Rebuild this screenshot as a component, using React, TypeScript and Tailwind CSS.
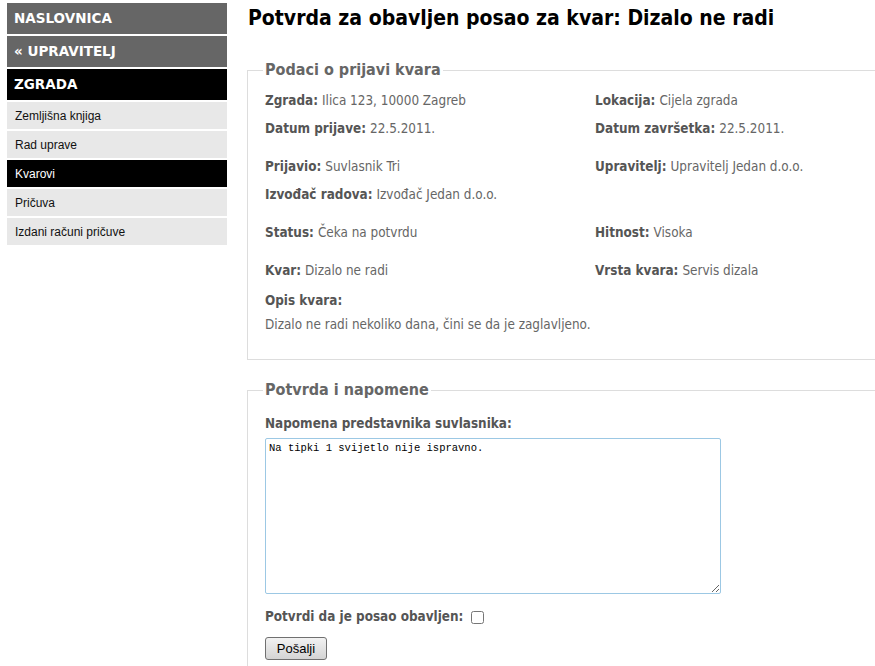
import React from 'react';

const tahoma = "font-['DejaVu_Sans_Condensed','DejaVu_Sans',sans-serif]";

interface FieldProps {
    label: string;
    value?: string;
}

const Field: React.FC<FieldProps> = ({ label, value }) => (
    <div className="h-[28px] flex items-center whitespace-nowrap">
        <span className="font-bold text-[#555]">{label}</span>
        {value && <span className="ml-[4px] text-[#666]">{value}</span>}
    </div>
);

const Row: React.FC<{ left: FieldProps; right?: FieldProps }> = ({ left, right }) => (
    <div className="grid grid-cols-[330px_1fr]">
        <Field {...left} />
        {right ? <Field {...right} /> : <div />}
    </div>
);

const menuHead = [
    { label: 'NASLOVNICA', bg: 'bg-[#666666]' },
    { label: '« UPRAVITELJ', bg: 'bg-[#666666]' },
    { label: 'ZGRADA', bg: 'bg-black' },
];

const menuSub = ['Zemljišna knjiga', 'Rad uprave', 'Kvarovi', 'Pričuva', 'Izdani računi pričuve'];

export default function App() {
    return (
        <div className="w-full h-[666px] overflow-hidden bg-white flex">
            <nav className="w-[220px] shrink-0 ml-[7px] mt-[3px] flex flex-col">
                {menuHead.map((m) => (
                    <a
                        key={m.label}
                        className={`${m.bg} h-[31px] mb-[2px] pl-[7px] flex items-center text-white font-bold text-[13.5px] font-['DejaVu_Sans',sans-serif]`}
                    >
                        {m.label}
                    </a>
                ))}
                {menuSub.map((s) => (
                    <a
                        key={s}
                        className={`${s === 'Kvarovi' ? 'bg-black text-white' : 'bg-[#e8e8e8] text-[#111]'} h-[27px] mb-[2px] pl-[8px] flex items-center text-[12px] font-['Liberation_Sans',Arial,sans-serif]`}
                    >
                        {s}
                    </a>
                ))}
            </nav>

            <main className={`w-[700px] shrink-0 ml-[20px] ${tahoma} text-[13.4px]`}>
                <h1 className="mt-[5px] ml-[1px] h-[26px] text-[21px] leading-[26px] font-bold text-black whitespace-nowrap">
                    Potvrda za obavljen posao za kvar: Dizalo ne radi
                </h1>

                <fieldset className="mt-[30px] border border-[#dddddd] pl-[17px] pr-4 pt-[8px] pb-[22px]">
                    <legend className="px-[2px] -ml-[2px] text-[16px] leading-[18px] font-bold text-[#666]">
                        Podaci o prijavi kvara
                    </legend>
                    <Row left={{ label: 'Zgrada:', value: 'Ilica 123, 10000 Zagreb' }} right={{ label: 'Lokacija:', value: 'Cijela zgrada' }} />
                    <Row left={{ label: 'Datum prijave:', value: '22.5.2011.' }} right={{ label: 'Datum završetka:', value: '22.5.2011.' }} />
                    <div className="mt-[10px]">
                        <Row left={{ label: 'Prijavio:', value: 'Suvlasnik Tri' }} right={{ label: 'Upravitelj:', value: 'Upravitelj Jedan d.o.o.' }} />
                        <Row left={{ label: 'Izvođač radova:', value: 'Izvođač Jedan d.o.o.' }} />
                    </div>
                    <div className="mt-[10px]">
                        <Row left={{ label: 'Status:', value: 'Čeka na potvrdu' }} right={{ label: 'Hitnost:', value: 'Visoka' }} />
                    </div>
                    <div className="mt-[10px]">
                        <Row left={{ label: 'Kvar:', value: 'Dizalo ne radi' }} right={{ label: 'Vrsta kvara:', value: 'Servis dizala' }} />
                    </div>
                    <div className="h-[24px] mt-[4px] flex items-center font-bold text-[#555]">Opis kvara:</div>
                    <div className="h-[24px] flex items-center text-[#666]">
                        Dizalo ne radi nekoliko dana, čini se da je zaglavljeno.
                    </div>
                </fieldset>

                <fieldset className="mt-[21px] border border-[#dddddd] pl-[17px] pr-4 pt-[13px] pb-4">
                    <legend className="px-[2px] -ml-[2px] text-[16px] leading-[18px] font-bold text-[#666]">
                        Potvrda i napomene
                    </legend>
                    <label className="h-[24px] flex items-center font-bold text-[#555]">
                        Napomena predstavnika suvlasnika:
                    </label>
                    <textarea
                        className="mt-[2px] block w-[456px] h-[156px] border border-[#9cc8e4] rounded-[2px] px-[3px] py-[2px] text-[10.5px] leading-[14px] text-black font-['Liberation_Mono','Courier_New',monospace] outline-none"
                        defaultValue="Na tipki 1 svijetlo nije ispravno."
                    />
                    <div className="mt-[13px] h-[20px] flex items-center gap-[8px]">
                        <span className="font-bold text-[#555]">Potvrdi da je posao obavljen:</span>
                        <input type="checkbox" className="w-[13px] h-[13px] m-0" />
                    </div>
                    <button className="mt-[10px] w-[62px] h-[23px] border border-[#707070] rounded-[3px] bg-gradient-to-b from-[#f2f2f2] to-[#d4d4d4] text-[13px] text-black font-['Liberation_Sans',Arial,sans-serif]">
                        Pošalji
                    </button>
                </fieldset>
            </main>
        </div>
    );
}
